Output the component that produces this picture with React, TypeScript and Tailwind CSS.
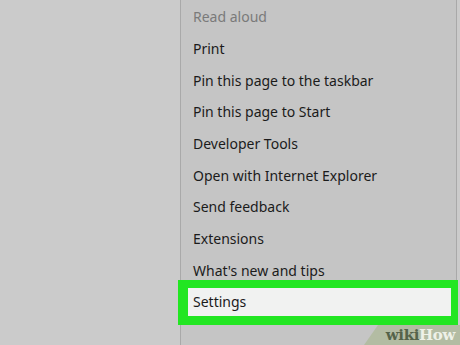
const items = [
  'Print',
  'Pin this page to the taskbar',
  'Pin this page to Start',
  'Developer Tools',
  'Open with Internet Explorer',
  'Send feedback',
  'Extensions',
  "What's new and tips",
];

export default function App() {
  return (
    <div
      className="relative flex h-[345px] w-[460px] overflow-hidden bg-[#cbcbcb] text-[14px] text-[#1b1b1b]"
      style={{ fontFamily: '"Noto Sans", "Open Sans", sans-serif' }}
    >
      <div className="w-[180px] shrink-0" />
      <div className="flex w-[277px] shrink-0 flex-col border-x border-[#a9a9a9] bg-[#c5c5c5] pt-[1px]">
        <div className="flex h-[31.67px] shrink-0 items-center pl-[12px] text-[#7a7a7a]">Read aloud</div>
        {items.map((label) => (
          <div key={label} className="flex h-[31.67px] shrink-0 items-center pl-[12px] whitespace-nowrap">
            {label}
          </div>
        ))}
        <div className="relative z-10 -ml-[3px] -mt-[6px] h-[45px] w-[280px] shrink-0 border-b-[9px] border-l-[10px] border-r-[7px] border-t-[8px] border-[#22e622]">
          <div className="flex h-full items-center bg-[#f1f2f1] pl-[5px]">Settings</div>
        </div>
      </div>

      {/* wikiHow watermark */}
      <div
        className="absolute bottom-0 right-0 flex h-[20px] w-[96px] items-center justify-end bg-[#b3bca3] pr-[5px]"
        style={{ clipPath: 'polygon(14px 0, 100% 0, 100% 100%, 0 100%)' }}
      >
        <span
          className="text-[15px] font-bold leading-none tracking-tight"
          style={{ fontFamily: '"DejaVu Serif", "Liberation Serif", serif' }}
        >
          <span className="text-[#55634a]">wiki</span>
          <span className="text-[#eef1e8]">How</span>
        </span>
      </div>
    </div>
  );
}
